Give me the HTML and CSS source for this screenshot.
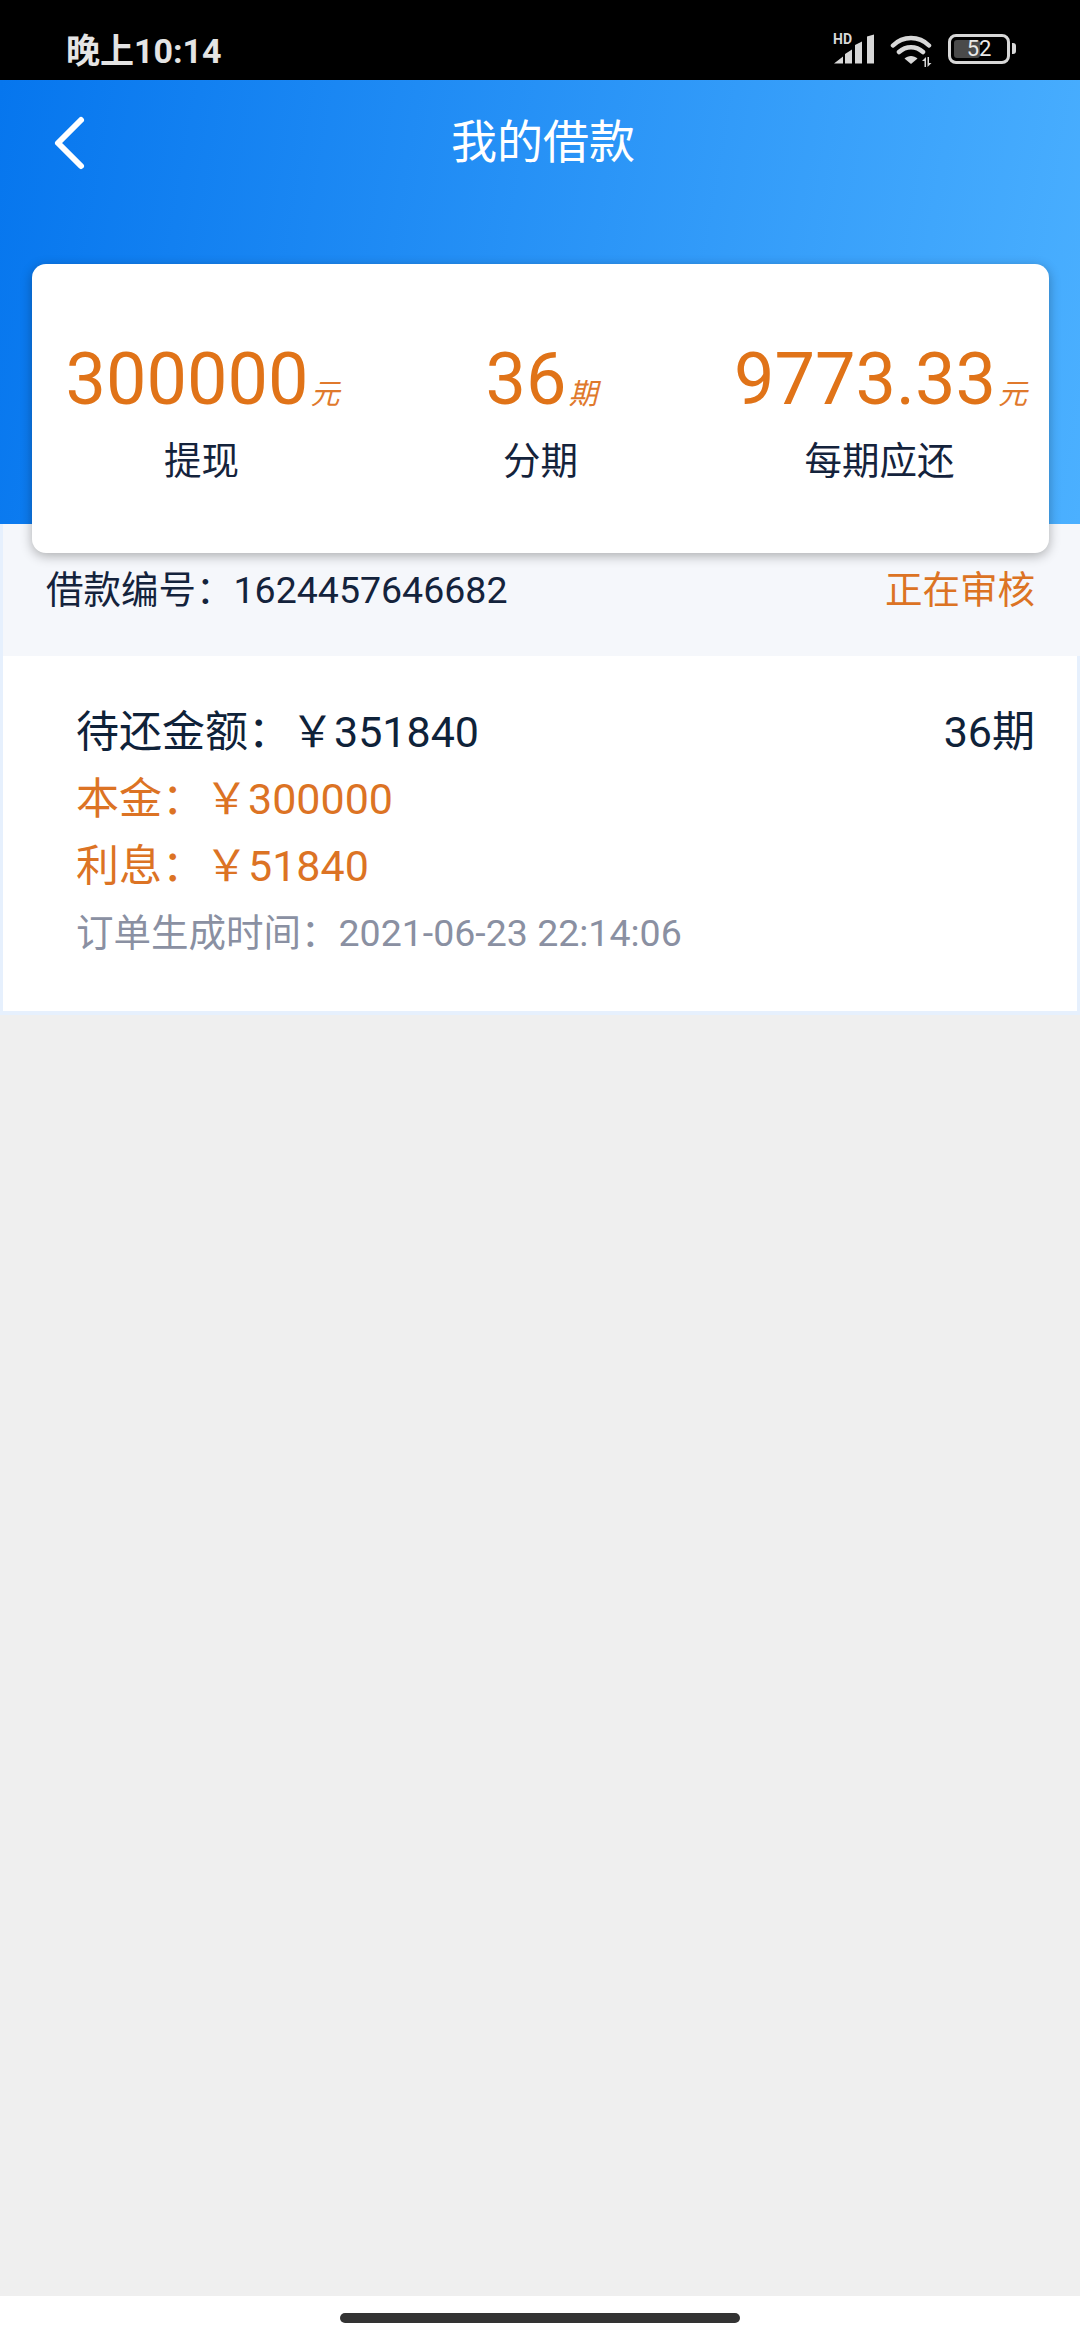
FILE: index.html
```html
<!DOCTYPE html>
<html lang="zh">
<head>
    <meta charset="UTF-8">
    <title>我的借款</title>
    <link rel="stylesheet" href="styles.css">
</head>
<body>
    <div id="page">
        <div class="status-bar">
            <span class="clock">晚上10:14</span>
            <div class="status-icons">
                <div class="signal">
                    <span class="hd">HD</span>
                    <svg width="42" height="30" viewBox="0 0 42 30">
                        <path d="M1 29.500l9-7v7z M12 29.500V20l7-4.500v14z M22 29.500V11l7-3.500v22z M34 29.500V2.500l7-2v29z" fill="#d8d8d8"/>
                    </svg>
                </div>
                <svg class="wifi" width="44" height="36" viewBox="0 0 44 36">
                    <path d="M3 14.500C13 4.500 29 4.500 39 14.500M9 21C16 14.500 26 14.500 33 21" fill="none" stroke="#d8d8d8" stroke-width="4.500" stroke-linecap="round"/>
                    <path d="M21 33l-6.500-5.500C18 24 24 24 27.500 27.500z" fill="#d8d8d8"/>
                    <path d="M36 26v10h-1.500v-6h-2.500zM37.500 36V26h1.500v6h2.500z" fill="#d8d8d8"/>
                </svg>
                <div class="battery">
                    <div class="battery-body">
                        <div class="battery-fill"></div>
                        <span class="battery-num">52</span>
                    </div>
                    <div class="battery-tip"></div>
                </div>
            </div>
        </div>

        <div class="hero">
            <svg class="back" width="34" height="56" viewBox="0 0 34 56">
                <path d="M29 5L6 28l23 23" fill="none" stroke="#fff" stroke-width="6" stroke-linecap="round" stroke-linejoin="round"/>
            </svg>
            <h1 class="title">我的借款</h1>
        </div>

        <div class="summary">
            <div class="summary-item">
                <div class="amount">300000<i class="unit">元</i></div>
                <div class="label">提现</div>
            </div>
            <div class="summary-item">
                <div class="amount">36<i class="unit">期</i></div>
                <div class="label">分期</div>
            </div>
            <div class="summary-item">
                <div class="amount">9773.33<i class="unit">元</i></div>
                <div class="label">每期应还</div>
            </div>
        </div>

        <div class="loan-row">
            <span>借款编号：1624457646682</span>
            <span class="orange">正在审核</span>
        </div>

        <div class="detail">
            <div class="detail-top">
                <span>待还金额：￥351840</span>
                <span>36期</span>
            </div>
            <div class="orange detail-line">本金：￥300000</div>
            <div class="orange detail-line">利息：￥51840</div>
            <div class="time">订单生成时间：2021-06-23 22:14:06</div>
        </div>

        <div class="blank"></div>

        <div class="nav-bar">
            <div class="home-pill"></div>
        </div>
    </div>
</body>
</html>
```

FILE: styles.css
```css
* {
    box-sizing: border-box;
}
html, body {
    margin: 0;
    padding: 0;
}
body {
    font-family: Roboto, "Noto Sans CJK SC", sans-serif;
    color: #14233c;
    background: #efefef;
}
#page {
    width: 1080px;
    height: 2340px;
    display: flex;
    flex-direction: column;
    overflow: hidden;
}
.status-bar {
    height: 80px;
    flex: none;
    background: #000;
    color: #e4e4e4;
    display: flex;
    justify-content: space-between;
    align-items: center;
    padding: 16px 64px 0 66px;
}
.clock {
    font-size: 34px;
    font-weight: 700;
}
.status-icons {
    display: flex;
    align-items: center;
    padding-top: 1px;
}
.signal {
    position: relative;
    width: 42px;
    height: 30px;
}
.signal svg {
    display: block;
}
.hd {
    position: absolute;
    left: 0;
    top: -2px;
    font-size: 14px;
    line-height: 14px;
    font-weight: 700;
    color: #d8d8d8;
}
.wifi {
    margin-left: 15px;
}
.battery {
    display: flex;
    align-items: center;
    gap: 2px;
    margin-left: 14px;
}
.battery-body {
    position: relative;
    width: 62px;
    height: 30px;
    border: 3.5px solid #d8d8d8;
    border-radius: 8px;
    text-align: center;
}
.battery-fill {
    position: absolute;
    left: 3px;
    top: 3px;
    bottom: 3px;
    width: 26px;
    background: #4a4a4a;
    border-radius: 3px;
}
.battery-num {
    position: relative;
    display: block;
    font-size: 22px;
    line-height: 23px;
    color: #e8e8e8;
}
.battery-tip {
    width: 4px;
    height: 11px;
    background: #d8d8d8;
    border-radius: 0 3px 3px 0;
}
.hero {
    height: 444px;
    flex: none;
    background: linear-gradient(100deg, #0676ee 0%, #4bb0ff 100%);
    position: relative;
    padding-top: 32px;
    text-align: center;
}
.back {
    position: absolute;
    left: 52px;
    top: 35px;
}
.title {
    margin: 0;
    font-size: 46px;
    line-height: 60px;
    font-weight: 400;
    color: #fff;
    padding-left: 6px;
}
.summary {
    position: relative;
    flex: none;
    height: 289px;
    margin: -260px 31px 0 32px;
    background: #fff;
    border-radius: 14px;
    box-shadow: 0 3px 12px rgba(0, 0, 0, 0.3);
    display: grid;
    grid-template-columns: 1fr 1fr 1fr;
    padding-top: 74px;
}
.summary-item {
    text-align: center;
}
.amount {
    font-size: 72px;
    line-height: 84px;
    color: #e07318;
    white-space: nowrap;
    padding-left: 2px;
}
.unit {
    font-size: 29px;
    margin-left: 2px;
    color: #e0792c;
}
.label {
    font-size: 37.5px;
    line-height: 50px;
    margin-top: 0;
}
.loan-row {
    flex: none;
    height: 132px;
    margin-top: -29px;
    padding: 29px 45px 0 43px;
    background: #f5f7fb;
    border-left: 3px solid #e6f0fd;
    display: flex;
    justify-content: space-between;
    font-size: 37.5px;
    line-height: 75px;
}
.orange {
    color: #dc7324;
}
.detail {
    flex: none;
    height: 359px;
    background: #fff;
    border-left: 3px solid #e6f0fd;
    border-right: 3px solid #e6f0fd;
    border-bottom: 4px solid #e6f0fd;
    padding: 48px 42px 0 73px;
    font-size: 43px;
}
.detail-top {
    display: flex;
    justify-content: space-between;
    line-height: 56px;
    color: #0f2239;
}
.detail-line {
    line-height: 56px;
    margin-top: 11px;
}
.time {
    font-size: 37.5px;
    line-height: 50px;
    margin-top: 14px;
    color: #8a90a2;
}
.blank {
    flex: 1;
    background: #efefef;
}
.nav-bar {
    height: 44px;
    flex: none;
    background: #fff;
    display: flex;
    justify-content: center;
    padding-top: 17px;
}
.home-pill {
    width: 400px;
    height: 10px;
    border-radius: 5px;
    background: #333;
}
```
